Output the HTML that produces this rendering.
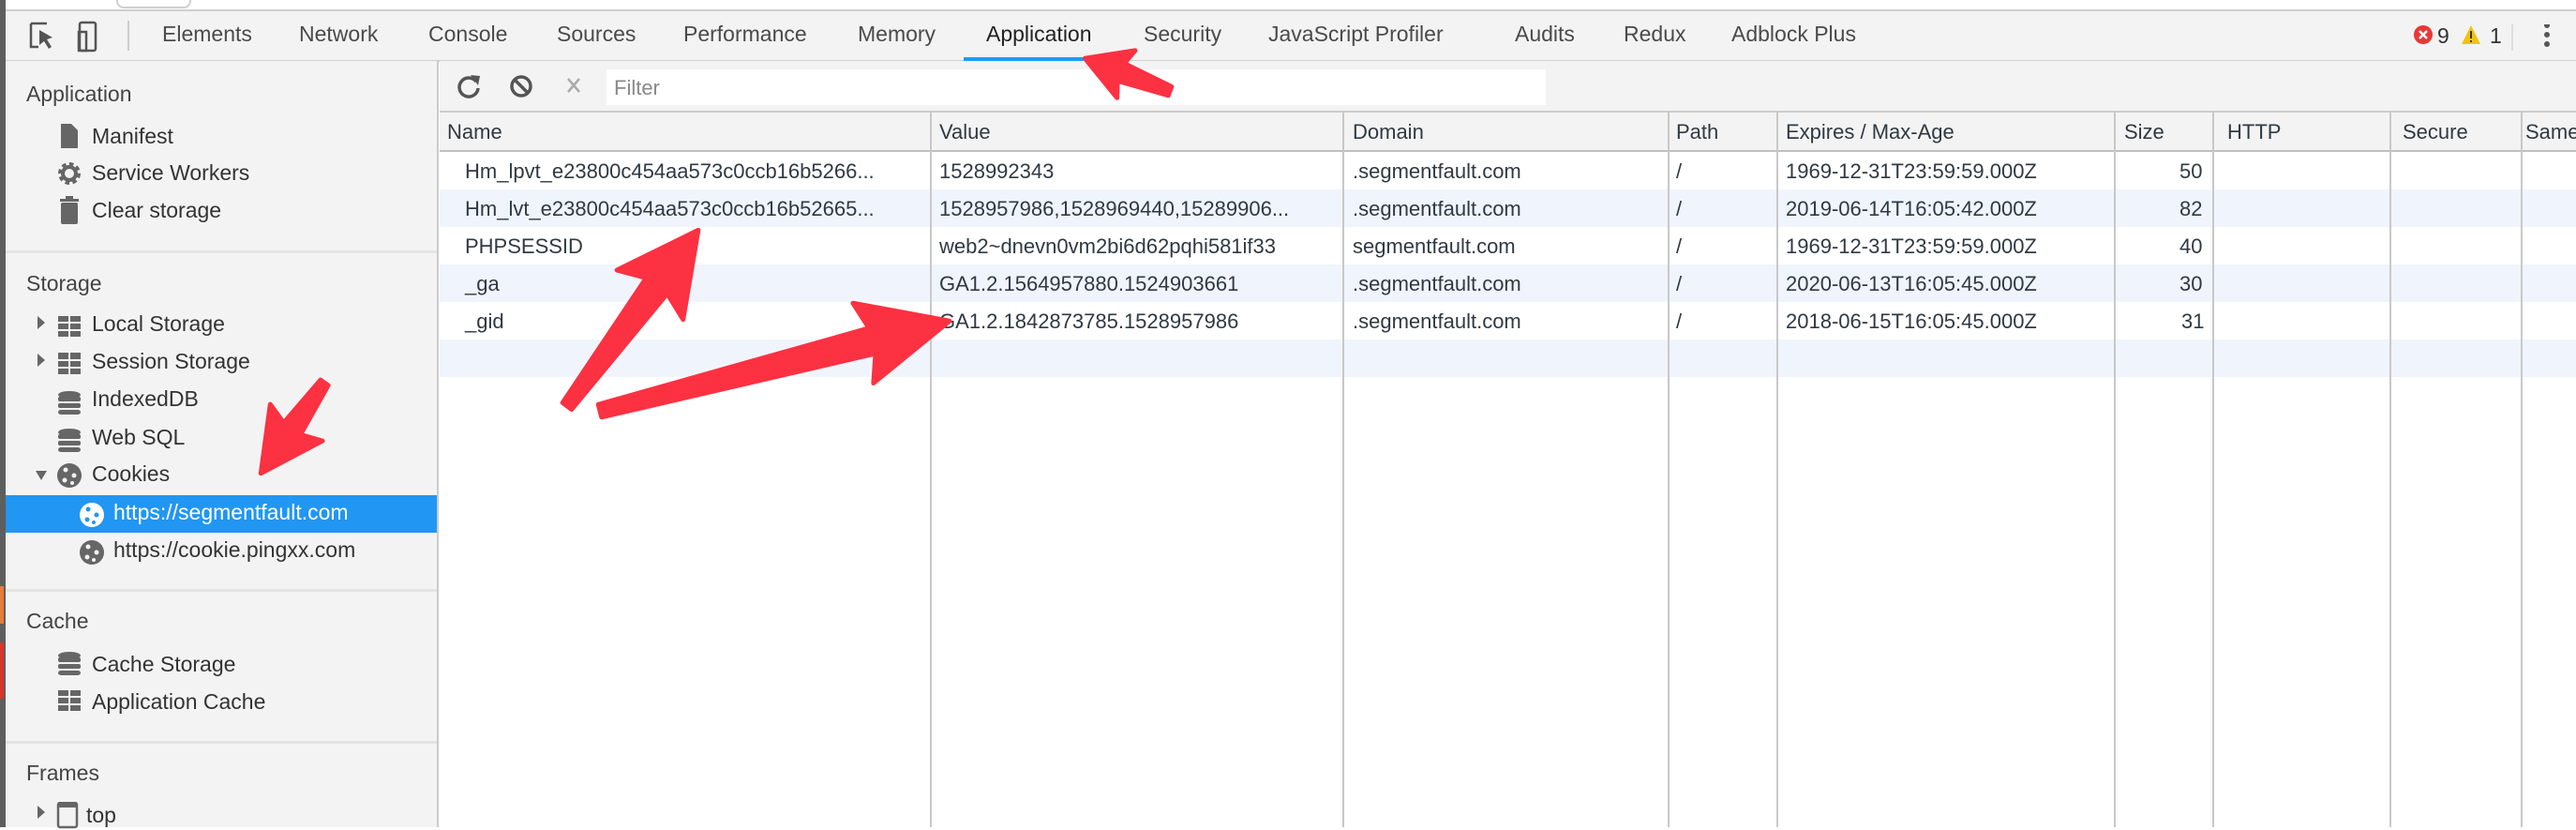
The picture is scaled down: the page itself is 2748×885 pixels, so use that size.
<!DOCTYPE html>
<html><head><meta charset="utf-8">
<style>
*{margin:0;padding:0;box-sizing:border-box}
body{width:2748px;height:882px;overflow:hidden;background:#fff;font-family:"Liberation Sans",Arial,sans-serif;font-size:22px;color:#303942;position:relative}
.a{position:absolute;white-space:nowrap}
.t{position:absolute;top:23px;color:#4a4a4a;font-size:23px}
.side{position:absolute;left:6px;top:65px;width:462px;height:817px;background:#f3f3f3;border-right:2px solid #cbcbcb}
.hd{position:absolute;left:22px;font-size:23px;color:#444}
.it{position:absolute;left:92px;font-size:23px;color:#333}
.dv{position:absolute;left:0;width:460px;height:3px;background:#e4e4e4}
.row{position:absolute;left:469px;width:2279px;height:40px}
.c{position:absolute;font-size:22px;white-space:nowrap;color:#303942}
.vl{position:absolute;top:120px;width:2px;height:762px;background:#c8c8c8}
</style></head><body>
<div class="a" style="left:0;top:0;width:2748px;height:11px;background:#fff"></div>
<div class="a" style="left:124px;top:-4px;width:80px;height:13px;border:2px solid #cfcfcf;border-top:none;border-radius:0 0 8px 8px;background:#fff"></div>
<div class="a" style="left:6px;top:10px;width:2742px;height:56px;background:#f3f3f3;border-top:2px solid #cfcfcf;border-bottom:2px solid #cfcfcf"></div>
<svg class="a" style="left:30px;top:22px" width="90" height="34" viewBox="0 0 90 34">
<path d="M3 3h17M3 3v25h8" fill="none" stroke="#555" stroke-width="2.5"/>
<path d="M12 10l14 8-6 2 5 8-3 2-5-8-5 4z" fill="#555"/>
<rect x="55" y="2" width="17" height="30" rx="2" fill="none" stroke="#555" stroke-width="2.5"/>
<rect x="54" y="12" width="8" height="20" fill="none" stroke="#555" stroke-width="2.5"/>
</svg>
<div class="a" style="left:136px;top:22px;width:2px;height:32px;background:#ccc"></div>
<div class="t" style="left:173px">Elements</div>
<div class="t" style="left:319px">Network</div>
<div class="t" style="left:457px">Console</div>
<div class="t" style="left:594px">Sources</div>
<div class="t" style="left:729px">Performance</div>
<div class="t" style="left:915px">Memory</div>
<div class="t" style="left:1052px;color:#222">Application</div>
<div class="a" style="left:1028px;top:61px;width:168px;height:4px;background:#1a9df0"></div>
<div class="t" style="left:1220px">Security</div>
<div class="t" style="left:1353px">JavaScript Profiler</div>
<div class="t" style="left:1616px">Audits</div>
<div class="t" style="left:1732px">Redux</div>
<div class="t" style="left:1847px">Adblock Plus</div>
<svg class="a" style="left:2574px;top:26px" width="160" height="30">
<circle cx="11" cy="11" r="10" fill="#e53935"/><path d="M7 7l8 8M15 7l-8 8" stroke="#fff" stroke-width="2.5"/>
<text x="26" y="20" font-family="Liberation Sans" font-size="23" fill="#333">9</text>
<path d="M62 1l10 20h-20z" fill="#f4c20d"/><rect x="61" y="7" width="2" height="8" fill="#333"/><rect x="61" y="17" width="2" height="2" fill="#333"/>
<text x="82" y="20" font-family="Liberation Sans" font-size="23" fill="#333">1</text>
<rect x="105" y="-4" width="2" height="32" fill="#ddd"/>
<circle cx="143" cy="1" r="3" fill="#555"/><circle cx="143" cy="11" r="3" fill="#555"/><circle cx="143" cy="21" r="3" fill="#555"/>
</svg>
<div class="a" style="left:0;top:0;width:6px;height:882px;background:#5e5e5e"></div>
<div class="a" style="left:0;top:625px;width:4px;height:40px;background:#e87a3a"></div>
<div class="a" style="left:0;top:685px;width:4px;height:60px;background:#d9362b"></div>
<div class="side">
<div class="hd" style="top:22px">Application</div>
<svg class="a" style="left:58px;top:66px" width="20" height="28"><path d="M1 1h11l7 7v19H1z" fill="#666"/></svg>
<div class="it" style="top:67px">Manifest</div>
<svg class="a" style="left:54px;top:106px" width="28" height="28" viewBox="0 0 28 28"><circle cx="14" cy="14" r="9" fill="none" stroke="#666" stroke-width="6" stroke-dasharray="4 3"/><circle cx="14" cy="14" r="7" fill="none" stroke="#666" stroke-width="4"/></svg>
<div class="it" style="top:106px">Service Workers</div>
<svg class="a" style="left:58px;top:144px" width="20" height="30"><rect x="0" y="3" width="20" height="3" fill="#666"/><rect x="6" y="0" width="8" height="4" fill="#666"/><rect x="1" y="7" width="18" height="23" rx="2" fill="#666"/></svg>
<div class="it" style="top:146px">Clear storage</div>
<div class="dv" style="top:202px"></div>
<div class="hd" style="top:224px">Storage</div>
<svg class="a" style="left:16px;top:272px" width="80" height="260">
<path d="M18 0l8 7-8 7z M18 40l8 7-8 7z" fill="#666"/>
<g fill="#666"><rect x="40" y="-1" width="11" height="7"/><rect x="53" y="-1" width="11" height="7"/><rect x="40" y="8" width="11" height="6"/><rect x="53" y="8" width="11" height="6"/><rect x="40" y="16" width="11" height="6"/><rect x="53" y="16" width="11" height="6"/></g>
<g fill="#666" transform="translate(0,40)"><rect x="40" y="-1" width="11" height="7"/><rect x="53" y="-1" width="11" height="7"/><rect x="40" y="8" width="11" height="6"/><rect x="53" y="8" width="11" height="6"/><rect x="40" y="16" width="11" height="6"/><rect x="53" y="16" width="11" height="6"/></g>
<g fill="#666"><ellipse cx="52" cy="84" rx="12" ry="4"/><rect x="40" y="86" width="24" height="5" rx="2"/><rect x="40" y="93" width="24" height="5" rx="2"/><rect x="40" y="100" width="24" height="5" rx="3"/></g>
<g fill="#666" transform="translate(0,40)"><ellipse cx="52" cy="84" rx="12" ry="4"/><rect x="40" y="86" width="24" height="5" rx="2"/><rect x="40" y="93" width="24" height="5" rx="2"/><rect x="40" y="100" width="24" height="5" rx="3"/></g>
<path d="M16 165h12l-6 10z" fill="#666"/>
<circle cx="52" cy="170" r="13" fill="#666"/><g fill="#f3f3f3"><circle cx="48" cy="164" r="2.5"/><circle cx="57" cy="170" r="2.5"/><circle cx="47" cy="175" r="2.5"/><circle cx="55" cy="178" r="2"/></g>
</svg>
<div class="it" style="top:267px">Local Storage</div>
<div class="it" style="top:307px">Session Storage</div>
<div class="it" style="top:347px">IndexedDB</div>
<div class="it" style="top:388px">Web SQL</div>
<div class="it" style="top:427px">Cookies</div>
<div class="a" style="left:0;top:463px;width:460px;height:40px;background:#2196f3"></div>
<svg class="a" style="left:78px;top:470px" width="30" height="30"><circle cx="14" cy="14" r="13" fill="#fff"/><g fill="#2196f3"><circle cx="10" cy="8" r="2.5"/><circle cx="19" cy="14" r="2.5"/><circle cx="9" cy="19" r="2.5"/><circle cx="16" cy="22" r="2"/></g></svg>
<div class="it" style="left:115px;top:468px;color:#fff">https://segmentfault.com</div>
<svg class="a" style="left:78px;top:510px" width="30" height="30"><circle cx="14" cy="14" r="13" fill="#666"/><g fill="#f3f3f3"><circle cx="10" cy="8" r="2.5"/><circle cx="19" cy="14" r="2.5"/><circle cx="9" cy="19" r="2.5"/><circle cx="16" cy="22" r="2"/></g></svg>
<div class="it" style="left:115px;top:508px">https://cookie.pingxx.com</div>
<div class="dv" style="top:563px"></div>
<div class="hd" style="top:584px">Cache</div>
<svg class="a" style="left:56px;top:630px" width="26" height="70"><g fill="#666"><ellipse cx="12" cy="4" rx="12" ry="4"/><rect x="0" y="6" width="24" height="5" rx="2"/><rect x="0" y="13" width="24" height="5" rx="2"/><rect x="0" y="20" width="24" height="5" rx="3"/>
<rect x="0" y="41" width="11" height="6"/><rect x="13" y="41" width="11" height="6"/><rect x="0" y="49" width="11" height="6"/><rect x="13" y="49" width="11" height="6"/><rect x="0" y="57" width="11" height="6"/><rect x="13" y="57" width="11" height="6"/></g></svg>
<div class="it" style="top:630px">Cache Storage</div>
<div class="it" style="top:670px">Application Cache</div>
<div class="dv" style="top:725px"></div>
<div class="hd" style="top:746px">Frames</div>
<svg class="a" style="left:34px;top:790px" width="60" height="30"><path d="M0 4l8 7-8 7z" fill="#666"/><rect x="22" y="1" width="20" height="26" rx="2" fill="none" stroke="#666" stroke-width="2.5"/><rect x="22" y="1" width="20" height="5" fill="#666"/></svg>
<div class="it" style="left:86px;top:791px">top</div>
</div>
<div class="a" style="left:469px;top:65px;width:2279px;height:55px;background:#f3f3f3;border-bottom:2px solid #cbcbcb"></div>
<svg class="a" style="left:486px;top:78px" width="150" height="30">
<path d="M22 9A10 10 0 1 0 24 16" fill="none" stroke="#555" stroke-width="3.5"/><path d="M16 2l10 1-2 10z" fill="#555"/>
<circle cx="70" cy="14" r="10" fill="none" stroke="#555" stroke-width="3.5"/><path d="M63 7l14 14" stroke="#555" stroke-width="3.5"/>
<path d="M120 6l12 14M132 6l-12 14" stroke="#aaa" stroke-width="2.5"/>
</svg>
<div class="a" style="left:647px;top:74px;width:1002px;height:38px;background:#fff"></div>
<div class="a" style="left:655px;top:81px;color:#888;font-size:22px">Filter</div>
<div class="a" style="left:469px;top:120px;width:2279px;height:42px;background:#f3f3f3;border-bottom:2px solid #c0c0c0"></div>
<div class="row" style="top:202px;background:#f0f5fd"></div>
<div class="row" style="top:282px;background:#f0f5fd"></div>
<div class="row" style="top:362px;background:#f0f5fd"></div>
<div class="vl" style="left:992px"></div><div class="vl" style="left:1432px"></div><div class="vl" style="left:1779px"></div><div class="vl" style="left:1895px"></div><div class="vl" style="left:2255px"></div><div class="vl" style="left:2360px"></div><div class="vl" style="left:2549px"></div><div class="vl" style="left:2689px"></div>
<div class="c" style="left:477px;top:128px">Name</div>
<div class="c" style="left:1002px;top:128px">Value</div>
<div class="c" style="left:1443px;top:128px">Domain</div>
<div class="c" style="left:1788px;top:128px">Path</div>
<div class="c" style="left:1905px;top:128px">Expires / Max-Age</div>
<div class="c" style="left:2266px;top:128px">Size</div>
<div class="c" style="left:2376px;top:128px">HTTP</div>
<div class="c" style="left:2563px;top:128px">Secure</div>
<div class="c" style="left:2694px;top:128px">Same</div>

<div class="c" style="left:496px;top:170px">Hm_lpvt_e23800c454aa573c0ccb16b5266...</div>
<div class="c" style="left:1002px;top:170px">1528992343</div>
<div class="c" style="left:1443px;top:170px">.segmentfault.com</div>
<div class="c" style="left:1788px;top:170px">/</div>
<div class="c" style="left:1905px;top:170px">1969-12-31T23:59:59.000Z</div>
<div class="c" style="left:2325px;top:170px">50</div>

<div class="c" style="left:496px;top:210px">Hm_lvt_e23800c454aa573c0ccb16b52665...</div>
<div class="c" style="left:1002px;top:210px">1528957986,1528969440,15289906...</div>
<div class="c" style="left:1443px;top:210px">.segmentfault.com</div>
<div class="c" style="left:1788px;top:210px">/</div>
<div class="c" style="left:1905px;top:210px">2019-06-14T16:05:42.000Z</div>
<div class="c" style="left:2325px;top:210px">82</div>

<div class="c" style="left:496px;top:250px">PHPSESSID</div>
<div class="c" style="left:1002px;top:250px">web2~dnevn0vm2bi6d62pqhi581if33</div>
<div class="c" style="left:1443px;top:250px">segmentfault.com</div>
<div class="c" style="left:1788px;top:250px">/</div>
<div class="c" style="left:1905px;top:250px">1969-12-31T23:59:59.000Z</div>
<div class="c" style="left:2325px;top:250px">40</div>

<div class="c" style="left:496px;top:290px">_ga</div>
<div class="c" style="left:1002px;top:290px">GA1.2.1564957880.1524903661</div>
<div class="c" style="left:1443px;top:290px">.segmentfault.com</div>
<div class="c" style="left:1788px;top:290px">/</div>
<div class="c" style="left:1905px;top:290px">2020-06-13T16:05:45.000Z</div>
<div class="c" style="left:2325px;top:290px">30</div>

<div class="c" style="left:496px;top:330px">_gid</div>
<div class="c" style="left:1002px;top:330px">GA1.2.1842873785.1528957986</div>
<div class="c" style="left:1443px;top:330px">.segmentfault.com</div>
<div class="c" style="left:1788px;top:330px">/</div>
<div class="c" style="left:1905px;top:330px">2018-06-15T16:05:45.000Z</div>
<div class="c" style="left:2327px;top:330px">31</div>

<svg class="a" style="left:0;top:0" width="2748" height="882">
<g fill="#fc3141" stroke="#fc3141" stroke-width="5" stroke-linejoin="round">
<g transform="translate(1248,97) rotate(201)"><polygon points="0,-5 56,-10 50,-27 97,0 50,27 56,10 0,5"/></g>
<g transform="translate(346,408) rotate(125)"><polygon points="0,-5 60,-11 52,-34 118,0 52,34 60,11 0,5"/></g>
<g transform="translate(605,433) rotate(-53.3)"><polygon points="0,-6 160,-14 148,-44 234,0 148,44 160,14 0,6"/></g>
<g transform="translate(640,438) rotate(-14.4)"><polygon points="0,-7 300,-14 290,-44 385,0 290,44 300,14 0,7"/></g>
</g>
</svg>
</body></html>
